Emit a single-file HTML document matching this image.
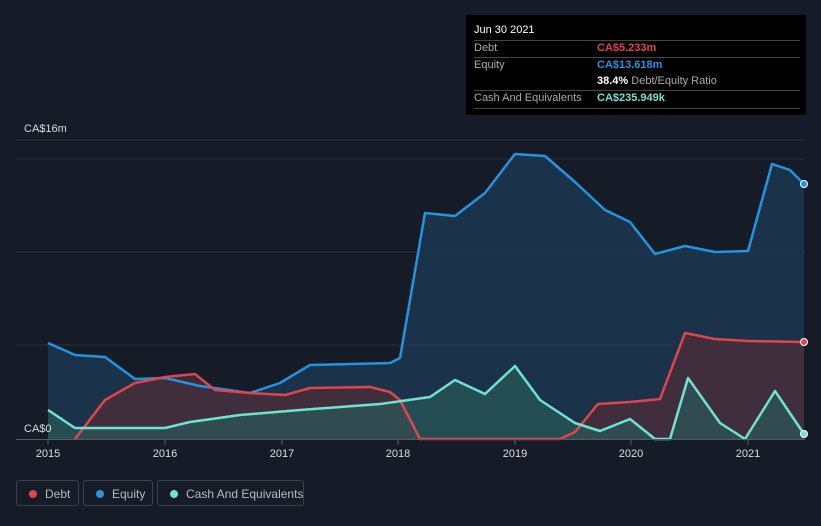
<!DOCTYPE html>
<html><head><meta charset="utf-8"><style>
body{margin:0;width:821px;height:526px;background:#161c27;font-family:"Liberation Sans",sans-serif;overflow:hidden;position:relative}
.tt{position:absolute;left:466px;top:15px;width:340px;height:100px;background:#000;color:#ddd;font-size:11px}
.tt .r{position:absolute;left:8px;width:326px;border-top:1px solid #444}
.lg{position:absolute;top:480px;height:26px;border:1px solid #3a404c;border-radius:3px;color:#bbb;font-size:12px;line-height:26px;box-sizing:border-box;white-space:nowrap}
.lg i{position:absolute;left:12px;top:9px;width:8px;height:8px;border-radius:50%}
</style></head><body>
<svg width="821" height="526" style="position:absolute;left:0;top:0">
<g stroke="#2a303b" stroke-width="1">
<line x1="16" y1="140" x2="805" y2="140"/><line x1="16" y1="159" x2="805" y2="159"/><line x1="16" y1="252" x2="805" y2="252"/><line x1="16" y1="345" x2="805" y2="345"/>
</g>
<path d="M48,343 L75,355 L105,357 L135,379 L165,378 L200,386 L250,393 L280,383 L310,365 L390,363 L400,358 L425,213 L455,216 L485,193 L515,154 L545,156 L575,182 L605,210 L630,222 L655,254 L685,246 L715,252 L748,251 L772,164 L790,170 L804,184 L804,439 L48,439Z" fill="#1b3a55" fill-opacity="0.8"/>
<path d="M75,439 L105,400 L135,383 L165,377 L195,374 L215,390 L250,393 L285,395 L310,388 L370,387 L390,392 L400,400 L420,439 L560,439 L575,432 L598,404 L630,402 L660,399 L685,333 L715,339 L748,341 L804,342 L804,439Z" fill="#4a2d3a" fill-opacity="0.8"/>
<path d="M48,410 L75,428 L165,428 L190,422 L240,415 L300,410 L380,404 L430,397 L455,380 L485,394 L515,366 L540,400 L575,423 L600,431 L630,419 L655,439 L670,439 L688,378 L720,423 L745,439 L775,391 L804,434 L804,439 L48,439Z" fill="#2b5a58" fill-opacity="0.7"/>
<g fill="none" stroke-width="2.5" stroke-linejoin="round">
<path d="M48,343 L75,355 L105,357 L135,379 L165,378 L200,386 L250,393 L280,383 L310,365 L390,363 L400,358 L425,213 L455,216 L485,193 L515,154 L545,156 L575,182 L605,210 L630,222 L655,254 L685,246 L715,252 L748,251 L772,164 L790,170 L804,184" stroke="#2394df"/>
<path d="M75,439 L105,400 L135,383 L165,377 L195,374 L215,390 L250,393 L285,395 L310,388 L370,387 L390,392 L400,400 L420,439 L560,439 L575,432 L598,404 L630,402 L660,399 L685,333 L715,339 L748,341 L804,342" stroke="#e0454f"/>
<path d="M48,410 L75,428 L165,428 L190,422 L240,415 L300,410 L380,404 L430,397 L455,380 L485,394 L515,366 L540,400 L575,423 L600,431 L630,419 L655,439 L670,439 L688,378 L720,423 L745,439 L775,391 L804,434" stroke="#6fe3d0"/>
</g>
<line x1="16" y1="439.5" x2="805" y2="439.5" stroke="#555b66"/>
<g stroke="#555b66"><line x1="48" y1="439" x2="48" y2="445"/><line x1="165" y1="439" x2="165" y2="445"/><line x1="282" y1="439" x2="282" y2="445"/><line x1="398" y1="439" x2="398" y2="445"/><line x1="515" y1="439" x2="515" y2="445"/><line x1="631" y1="439" x2="631" y2="445"/><line x1="748" y1="439" x2="748" y2="445"/></g>
<circle cx="804" cy="184" r="3.5" fill="#2394df" stroke="#fff" stroke-width="1"/>
<circle cx="804" cy="342" r="3.5" fill="#e0454f" stroke="#fff" stroke-width="1"/>
<circle cx="804" cy="434" r="3.5" fill="#6fe3d0" stroke="#fff" stroke-width="1"/>
<g fill="#ddd" font-size="11" font-family="Liberation Sans" text-anchor="middle">
<text x="48" y="457">2015</text><text x="165" y="457">2016</text><text x="282" y="457">2017</text><text x="398" y="457">2018</text><text x="515" y="457">2019</text><text x="631" y="457">2020</text><text x="748" y="457">2021</text>
</g>
<text x="24" y="132" fill="#ddd" font-size="11" font-family="Liberation Sans">CA$16m</text>
<text x="24" y="432" fill="#ddd" font-size="11" font-family="Liberation Sans">CA$0</text>
</svg>
<div class="tt">
<div style="position:absolute;left:8px;top:9px;color:#fff">Jun 30 2021</div>
<div class="r" style="top:25px"></div>
<div style="position:absolute;left:8px;top:27px;color:#aaa">Debt</div><div style="position:absolute;left:131px;top:27px;color:#e0454f;font-weight:bold">CA$5.233m</div>
<div class="r" style="top:42px"></div>
<div style="position:absolute;left:8px;top:44px;color:#aaa">Equity</div><div style="position:absolute;left:131px;top:44px;color:#2394df;font-weight:bold">CA$13.618m</div>
<div style="position:absolute;left:131px;top:60px;color:#aaa"><b style="color:#fff">38.4%</b> Debt/Equity Ratio</div>
<div class="r" style="top:75px"></div>
<div style="position:absolute;left:8px;top:77px;color:#aaa">Cash And Equivalents</div><div style="position:absolute;left:131px;top:77px;color:#6fe3d0;font-weight:bold">CA$235.949k</div>
<div class="r" style="top:93px"></div>
</div>
<div class="lg" style="left:16px;width:63px"><i style="background:#e0454f"></i><span style="position:absolute;left:28px">Debt</span></div>
<div class="lg" style="left:83px;width:70px"><i style="background:#2394df"></i><span style="position:absolute;left:28px">Equity</span></div>
<div class="lg" style="left:157px;width:147px"><i style="background:#6fe3d0"></i><span style="position:absolute;left:28px">Cash And Equivalents</span></div>
</body></html>
